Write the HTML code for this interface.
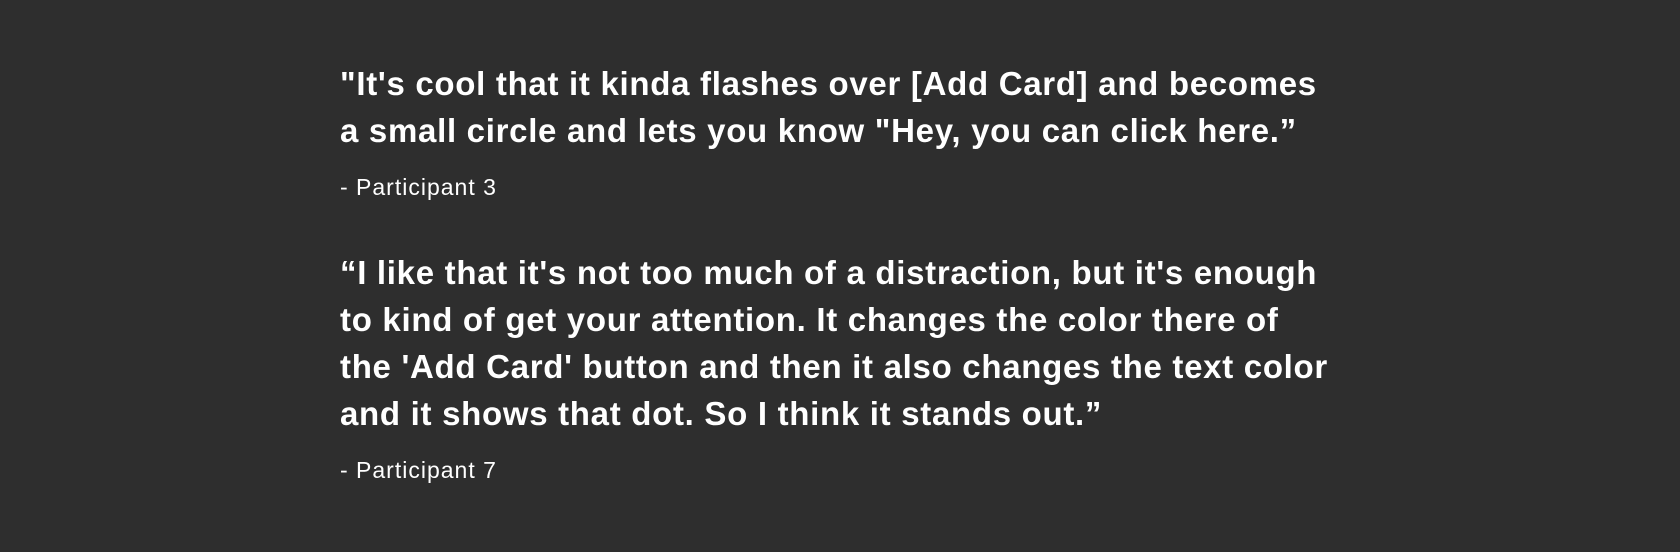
<!DOCTYPE html>
<html><head><meta charset="utf-8"><style>
html,body{margin:0;padding:0;background:#2e2e2e;width:1680px;height:552px;overflow:hidden}
.q{position:absolute;left:340px;color:#fff;font-family:"Liberation Sans",sans-serif;font-weight:700;font-size:33px;line-height:47px;white-space:nowrap;letter-spacing:0.7px}
.p{position:absolute;left:340px;color:#fff;font-family:"Liberation Sans",sans-serif;font-size:23px;line-height:24px;white-space:nowrap;letter-spacing:1px}
</style></head><body>
<div class="q" style="top:60px">"It's cool that it kinda flashes over [Add Card] and becomes<br>a small circle and lets you know "Hey, you can click here.”</div>
<div class="p" style="top:175px">- Participant 3</div>
<div class="q" style="top:249px">“I like that it's not too much of a distraction, but it's enough<br>to kind of get your attention. It changes the color there of<br>the 'Add Card' button and then it also changes the text color<br>and it shows that dot. So I think it stands out.”</div>
<div class="p" style="top:458px">- Participant 7</div>
</body></html>
